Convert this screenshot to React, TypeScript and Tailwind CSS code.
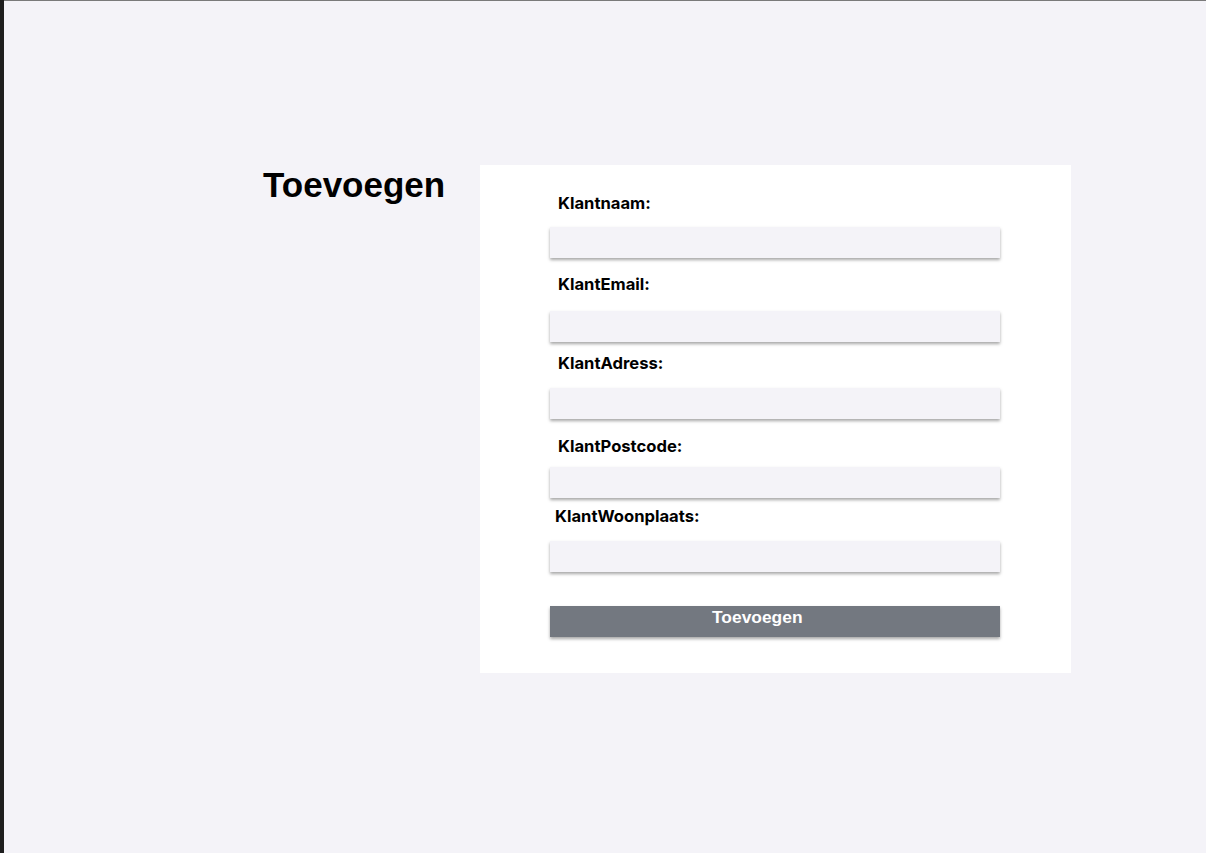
import React from "react";

const fields = [
  { label: "Klantnaam:", labelClass: "pl-2 mt-[28px]", inputClass: "mt-[14px]" },
  { label: "KlantEmail:", labelClass: "pl-2 mt-[16px]", inputClass: "mt-[17px]" },
  { label: "KlantAdress:", labelClass: "pl-2 mt-[11px]", inputClass: "mt-[15px]" },
  { label: "KlantPostcode:", labelClass: "pl-2 mt-[17px]", inputClass: "mt-[11px]" },
  { label: "KlantWoonplaats:", labelClass: "pl-[5px] mt-[8px]", inputClass: "mt-[15px]" },
];

const App = () => {
  return (
    <div className="flex min-h-screen w-full bg-[#f4f3f8]">
      <div className="w-[4px] shrink-0 bg-[#1e1e1e]" />
      <div className="flex-1 border-t border-[#7a7a7a]">
        <div className="flex pl-[259px] pt-[164px]">
          <h1 className="mt-[2px] w-[217px] shrink-0 font-['Liberation_Sans',Arial,sans-serif] text-[35px] font-bold leading-none text-black">
            Toevoegen
          </h1>
          <form
            className="flex h-[508px] w-[591px] flex-col bg-white pl-[70px]"
            onSubmit={(e) => e.preventDefault()}
          >
            {fields.map((f) => (
              <React.Fragment key={f.label}>
                <label
                  className={`${f.labelClass} block font-['Inter',sans-serif] text-[16.6px] font-bold leading-5 text-black`}
                >
                  {f.label}
                </label>
                <input
                  type="text"
                  className={`${f.inputClass} h-[31px] w-[450px] bg-[#f4f3f8] shadow-[0_2px_3px_rgba(0,0,0,0.35)] outline-none`}
                />
              </React.Fragment>
            ))}
            <button
              type="submit"
              className="mt-[34px] flex h-[31px] w-[450px] items-start bg-[#737880] pl-[162px] pt-px font-['Liberation_Sans',Arial,sans-serif] text-[17.4px] font-bold leading-5 text-white shadow-[0_2px_3px_rgba(0,0,0,0.35)]"
            >
              Toevoegen
            </button>
          </form>
        </div>
      </div>
    </div>
  );
};

export default App;
